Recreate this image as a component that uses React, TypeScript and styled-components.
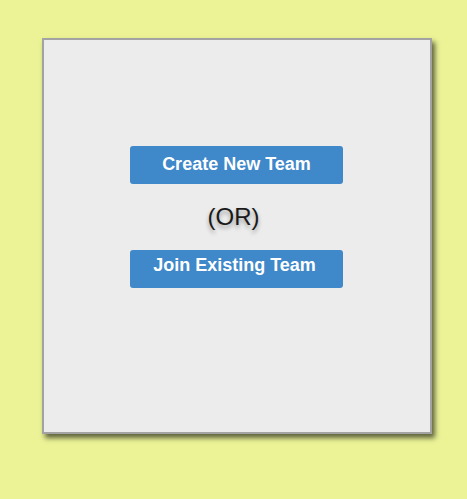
import React from "react";
import styled, { createGlobalStyle } from "styled-components";

const Global = createGlobalStyle`
  html, body { margin: 0; padding: 0; background: #ebf396; }
  body { font-family: "Liberation Sans", Arial, sans-serif; }
`;

const Page = styled.div`
  width: 467px;
  height: 499px;
  padding: 38px 0 0 42px;
  box-sizing: border-box;
`;

const Card = styled.div`
  width: 390px;
  height: 396px;
  box-sizing: border-box;
  background: #ececec;
  border: 2px solid #a3a3a3;
  box-shadow: 3px 4px 5px rgba(0, 0, 0, 0.6);
  display: flex;
  flex-direction: column;
  align-items: center;
  padding-top: 106px;
`;

const Button = styled.button<{ $shift?: boolean }>`
  width: 213px;
  height: 38px;
  margin-left: -1px;
  border: none;
  border-radius: 3px;
  background: #3f88c9;
  color: #ffffff;
  font-family: "Liberation Sans", Arial, sans-serif;
  font-weight: bold;
  font-size: 18px;
  padding: ${(p) => (p.$shift ? "0 4px 8px 0" : "0 0 2px")};
  cursor: pointer;
`;

const Or = styled.div`
  height: 66px;
  display: flex;
  align-items: center;
  justify-content: center;
  font-size: 24px;
  color: #1a1a1a;
  text-shadow: 0 3px 4px rgba(0, 0, 0, 0.35);
  margin-left: -7px;
`;

export default function App() {
  return (
    <>
      <Global />
      <Page>
        <Card>
          <Button>Create New Team</Button>
          <Or>(OR)</Or>
          <Button $shift>Join Existing Team</Button>
        </Card>
      </Page>
    </>
  );
}
